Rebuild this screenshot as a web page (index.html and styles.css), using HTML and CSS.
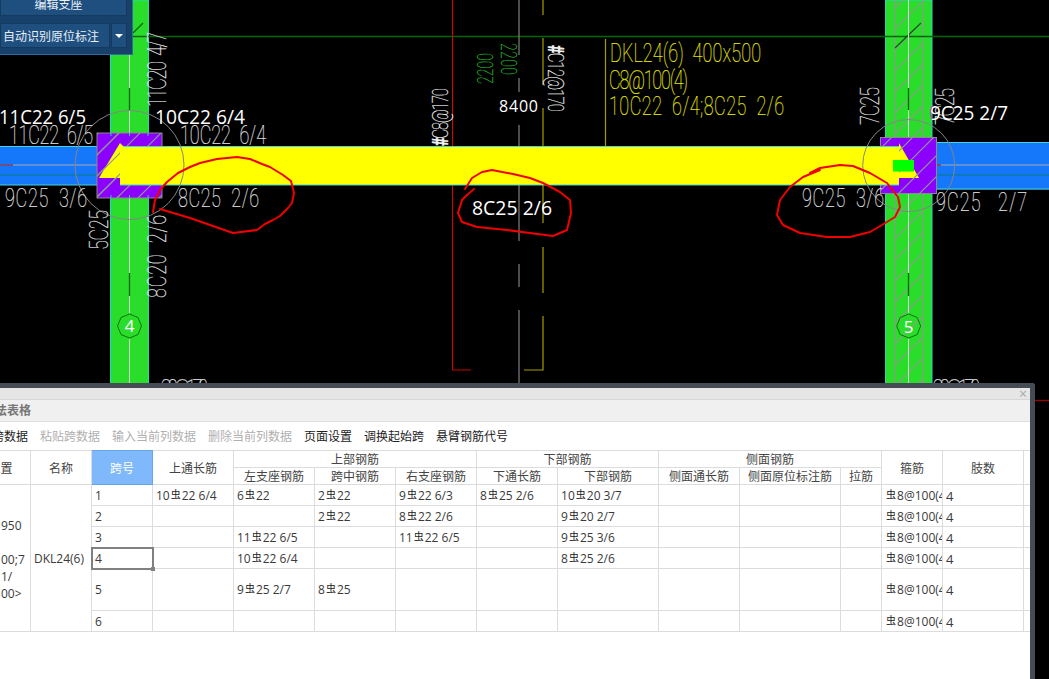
FILE: index.html
```html
<!DOCTYPE html>
<html lang="zh">
<head>
<meta charset="utf-8">
<title>平法表格</title>
<link rel="stylesheet" href="styles.css">
</head>
<body>
<main class="stage">
  <svg class="cad" width="1049" height="679" viewBox="0 0 1049 679" xmlns="http://www.w3.org/2000/svg">
    <defs>
      <pattern id="hatch" patternUnits="userSpaceOnUse" width="21" height="21">
        <path class="hatch-line" d="M-2 23L23 -2M-2 2L2 -2M19 23L23 19"/>
      </pattern>
    </defs>

    <!-- columns -->
    <rect class="col" x="110.5" y="0" width="38" height="390"/>
    <rect class="col" x="885.5" y="0" width="46.5" height="390"/>
    <rect class="hatch-fill" x="895" y="0" width="28" height="390"/>
    <path class="col-rule" d="M895 0V147M895 186V390M922.5 0V390"/>

    <!-- grid and axis lines -->
    <path class="axis-green" d="M133 36.5H1049M133 33L143 23M895 48L921 23"/>
    <path class="axis-green" d="M129.500 88V110M129.500 273V296M908.500 88V110M908.500 273V296"/>
    <path class="axis-white" d="M129.500 55V88M129.500 110V133M129.500 198V273M129.500 296V313M129.500 339V390M908.500 0V88M908.500 110V137M908.500 193V273M908.500 296V313M908.500 339V390"/>
    <path class="line-red" d="M452.500 0V370"/>
    <path class="line-red-dark" d="M452 370H471"/>
    <path class="line-gray" d="M519 0V55M519 78V92M519 125V147M519 185V241M519 264V287M519 310V390"/>
    <path class="line-yellow" d="M543 0V15M543 38V85M543 108V147M543 185V223M543 247V293M543 316V370H524M605.500 39V147"/>
    <path class="line-red-dark" d="M1030 400.500H1049"/>

    <!-- beams -->
    <rect class="beam-blue" x="0" y="147" width="100" height="38"/>
    <rect class="beam-blue" x="936" y="142.500" width="113" height="47"/>
    <path class="beam-edge" d="M0 146.500H101M0 185H101M936 142.500H1049M936 189H1049"/>
    <path class="beam-mid" d="M0 165H100M936 165H1049"/>
    <path class="beam-teal" d="M0 175H100M936 175H1049"/>
    <path class="beam-red" d="M0 165H13M914 165H941"/>

    <!-- supports -->
    <rect class="support" x="97" y="133" width="65" height="65"/>
    <rect class="hatch-fill" x="97" y="133" width="65" height="65"/>
    <rect class="support" x="880.500" y="137.500" width="56" height="56"/>
    <path class="tick" d="M111 133V136M129.500 133V136M148 133V136M111 195V198M129.500 195V198M148 195V198"/>

    <!-- yellow span -->
    <rect class="beam-yellow" x="120" y="147" width="779" height="38"/>
    <path class="beam-edge" d="M123 146.500H899M120 185H899"/>
    <polygon class="beam-yellow" points="120,143 124,147 124,178 99,178"/>
    <polygon class="beam-yellow" points="899,143 919,178 899,178"/>
    <rect class="hatch-fill" x="97" y="133" width="23" height="65"/>
    <rect class="hatch-fill" x="899" y="137.500" width="37.500" height="56"/>
    <rect class="hatch-fill" x="880.500" y="137.500" width="18.500" height="9"/>
    <rect class="hatch-fill" x="880.500" y="185" width="18.500" height="8.500"/>
    <rect class="support-active" x="893" y="160" width="21" height="11.500"/>

    <circle class="ring" cx="129.500" cy="165" r="54.500"/>
    <circle class="ring" cx="908.700" cy="165.500" r="46"/>

    <!-- axis bubbles -->
    <polygon class="bubble" points="129.500,314 138,317.500 141.500,326 138,334.500 129.500,338 121,334.500 117.500,326 121,317.500"/>
    <polygon class="bubble" points="908.700,314 917.200,317.500 920.700,326 917.200,334.500 908.700,338 900.200,334.500 896.700,326 900.200,317.500"/>
    <text class="bubble-text" x="129.500" y="332">4</text>
    <text class="bubble-text" x="908.700" y="333">5</text>

    <!-- drawing text in the stroke font -->
    <text class="shx" transform="translate(9 144) scale(1 1.4)" textLength="84">11C22  6/5</text>
    <text class="shx" transform="translate(180 144) scale(1 1.4)" textLength="86">10C22  6/4</text>
    <text class="shx" transform="translate(5 207) scale(1 1.4)" textLength="82">9C25  3/6</text>
    <text class="shx" transform="translate(178 207) scale(1 1.4)" textLength="81">8C25  2/6</text>
    <text class="shx" transform="translate(802 207) scale(1 1.4)" textLength="82">9C25  3/6</text>
    <text class="shx" transform="translate(936 211) scale(1 1.4)" textLength="91">9C25   2/7</text>
    <text class="shx" transform="translate(166 107) rotate(-90) scale(1 1.4)" textLength="75">11C20  4/7</text>
    <text class="shx" transform="translate(108 250) rotate(-90) scale(1 1.4)" textLength="40">5C25</text>
    <text class="shx" transform="translate(166 298) rotate(-90) scale(1 1.4)" textLength="83">8C20  2/6</text>
    <text class="shx" transform="translate(879 125) rotate(-90) scale(1 1.4)" textLength="38">7C25</text>
    <text class="shx" transform="translate(954 125) rotate(-90) scale(1 1.4)" textLength="37">7C25</text>
    <text class="shx shx-small" transform="translate(448 146) rotate(-90) scale(1 1.45)" textLength="58"><tspan class="shx-blob">#</tspan>C8@170</text>
    <text class="shx shx-small" transform="translate(548 45) rotate(90) scale(1 1.45)" textLength="67"><tspan class="shx-blob">#</tspan>C12@170</text>
    <text class="shx shx-green" transform="translate(493 84) rotate(-90) scale(1 1.55)" textLength="31">2200</text>
    <text class="shx shx-green" transform="translate(501 43) rotate(90) scale(1 1.55)" textLength="32">2200</text>
    <text class="shx shx-yellow" transform="translate(610 62) scale(1 1.4)" textLength="151">DKL24(6)  400x500</text>
    <text class="shx shx-yellow" transform="translate(609 89) scale(1 1.4)" textLength="79">C8@100(4)</text>
    <text class="shx shx-yellow" transform="translate(609 115) scale(1 1.4)" textLength="175">10C22  6/4;8C25  2/6</text>
    <text class="shx" transform="translate(160 398) scale(1 1.4)" textLength="48">C8@170</text>
    <text class="shx" transform="translate(932 398) scale(1 1.4)" textLength="48">C8@170</text>

    <!-- white annotations -->
    <text class="note" x="-1" y="124" textLength="87" lengthAdjust="spacingAndGlyphs">11C22 6/5</text>
    <text class="note" x="155" y="124" textLength="90" lengthAdjust="spacingAndGlyphs">10C22 6/4</text>
    <text class="note note-small" x="499" y="112" textLength="39">8400</text>
    <text class="note" x="472" y="215" textLength="80" lengthAdjust="spacingAndGlyphs">8C25 2/6</text>
    <text class="note" x="930" y="120" textLength="78" lengthAdjust="spacingAndGlyphs">9C25 2/7</text>
    <path class="magenta-mark" d="M933 105C930 108 930 115 932 119"/>

    <!-- red pen marks -->
    <path class="pen" d="M153 212L155 200L160 190L167 182L178 173L190 167L200 163L217 159L237 157L250 159L262 164L270 167L283 175L291 181L294 193L292 203L288 208L280 216L273 220L265 224L257 230L233 233L213 226L190 218L170 212L160 209"/>
    <path class="pen" d="M465 189L472 178L482 172L492 170L513 174L530 178L543 183L560 192L570 200L571 213L567 230L553 236L530 233L507 230L477 227L462 222L458 213L462 200L467 195L474 189"/>
    <path class="pen" d="M810 173L820 168L840 165L853 166L870 173L887 183L898 197L900 207L895 217L882 225L870 232L850 237L827 237L800 233L783 225L777 215L780 200L790 187L803 177L820 170"/>
  </svg>

  <div class="panel">
    <div class="panel-button panel-button-top">编辑支座</div>
    <div class="panel-row">
      <div class="panel-button panel-button-main">自动识别原位标注</div>
      <div class="panel-button panel-button-menu"><span class="caret"></span></div>
    </div>
  </div>

  <section class="dialog">
    <div class="dialog-top"><span class="dialog-close">×</span></div>
    <div class="dialog-title">平法表格</div>
    <div class="toolbar">
      <span class="tool">复制跨数据</span>
      <span class="tool tool-off">粘贴跨数据</span>
      <span class="tool tool-off">输入当前列数据</span>
      <span class="tool tool-off">删除当前列数据</span>
      <span class="tool">页面设置</span>
      <span class="tool">调换起始跨</span>
      <span class="tool">悬臂钢筋代号</span>
    </div>
    <table class="grid">
      <colgroup>
        <col class="w60"><col class="w61"><col class="w61"><col class="w81"><col class="w81"><col class="w81"><col class="w81"><col class="w81"><col class="w101"><col class="w81"><col class="w101"><col class="w41"><col class="w61"><col class="w81"><col class="w7">
      </colgroup>
      <thead>
        <tr class="head-row">
          <th rowspan="2">位置</th>
          <th rowspan="2">名称</th>
          <th rowspan="2" class="head-active">跨号</th>
          <th rowspan="2">上通长筋</th>
          <th colspan="3">上部钢筋</th>
          <th colspan="2">下部钢筋</th>
          <th colspan="3">侧面钢筋</th>
          <th rowspan="2">箍筋</th>
          <th rowspan="2">肢数</th>
          <th rowspan="2"></th>
        </tr>
        <tr class="head-row">
          <th>左支座钢筋</th><th>跨中钢筋</th><th>右支座钢筋</th>
          <th>下通长筋</th><th>下部钢筋</th>
          <th>侧面通长筋</th><th>侧面原位标注筋</th><th>拉筋</th>
        </tr>
      </thead>
      <tbody>
        <tr class="row">
          <td rowspan="6" class="cell-pos"><p class="pos-line pos-a">950</p><p class="pos-line">00;7</p><p class="pos-line">1/</p><p class="pos-line">00&gt;</p></td>
          <td rowspan="6" class="cell-name">DKL24(6)</td>
          <td>1</td><td>10<span class="bar">虫</span>22 6/4</td><td>6<span class="bar">虫</span>22</td><td>2<span class="bar">虫</span>22</td><td>9<span class="bar">虫</span>22 6/3</td><td>8<span class="bar">虫</span>25 2/6</td><td>10<span class="bar">虫</span>20 3/7</td><td></td><td></td><td></td><td class="cell-clip"><span class="bar">虫</span>8@100(4)</td><td class="cell-count">4</td><td></td>
        </tr>
        <tr class="row">
          <td>2</td><td></td><td></td><td>2<span class="bar">虫</span>22</td><td>8<span class="bar">虫</span>22 2/6</td><td></td><td>9<span class="bar">虫</span>20 2/7</td><td></td><td></td><td></td><td class="cell-clip"><span class="bar">虫</span>8@100(4)</td><td class="cell-count">4</td><td></td>
        </tr>
        <tr class="row">
          <td>3</td><td></td><td>11<span class="bar">虫</span>22 6/5</td><td></td><td>11<span class="bar">虫</span>22 6/5</td><td></td><td>9<span class="bar">虫</span>25 3/6</td><td></td><td></td><td></td><td class="cell-clip"><span class="bar">虫</span>8@100(4)</td><td class="cell-count">4</td><td></td>
        </tr>
        <tr class="row">
          <td class="cell-selected">4</td><td></td><td>10<span class="bar">虫</span>22 6/4</td><td></td><td></td><td></td><td>8<span class="bar">虫</span>25 2/6</td><td></td><td></td><td></td><td class="cell-clip"><span class="bar">虫</span>8@100(4)</td><td class="cell-count">4</td><td></td>
        </tr>
        <tr class="row row-tall">
          <td>5</td><td></td><td>9<span class="bar">虫</span>25 2/7</td><td>8<span class="bar">虫</span>25</td><td></td><td></td><td></td><td></td><td></td><td></td><td class="cell-clip"><span class="bar">虫</span>8@100(4)</td><td class="cell-count">4</td><td></td>
        </tr>
        <tr class="row">
          <td>6</td><td></td><td></td><td></td><td></td><td></td><td></td><td></td><td></td><td></td><td class="cell-clip"><span class="bar">虫</span>8@100(4)</td><td class="cell-count">4</td><td></td>
        </tr>
      </tbody>
    </table>
  </section>
</main>
</body>
</html>
```
FILE: styles.css
```css
* { box-sizing: border-box; }

html, body {
  margin: 0;
  padding: 0;
  background: #000;
  overflow: hidden;
}

.stage {
  position: relative;
  width: 1049px;
  height: 679px;
  overflow: hidden;
  background: #000;
  font-family: "Open Sans", "Noto Sans CJK SC", sans-serif;
}

.cad {
  position: absolute;
  left: 0;
  top: 0;
  display: block;
}

/* drawing fills */
.col { fill: #2bdd2b; stroke: #22d6c8; stroke-width: 1; }
.col-rule { fill: none; stroke: #8c9a8c; stroke-width: 1.2; }
.hatch-line { fill: none; stroke: #8f9a8f; stroke-width: 1.2; }
.hatch-fill { fill: url(#hatch); }
.axis-green { fill: none; stroke: #006600; stroke-width: 1.3; }
.axis-white { fill: none; stroke: #d4d4d4; stroke-width: 1; }
.line-red { fill: none; stroke: #e00000; stroke-width: 1; }
.line-red-dark { fill: none; stroke: #9c0000; stroke-width: 1.3; }
.line-gray { fill: none; stroke: #808080; stroke-width: 1.2; }
.line-yellow { fill: none; stroke: #a39d00; stroke-width: 1.2; }
.beam-blue { fill: #1577fa; }
.beam-edge { fill: none; stroke: #45d4dc; stroke-width: 1; }
.beam-mid { fill: none; stroke: #a8a8b8; stroke-width: 1; }
.beam-teal { fill: none; stroke: #0a7c80; stroke-width: 1.2; }
.beam-red { fill: none; stroke: #8a0a2a; stroke-width: 1; }
.beam-yellow { fill: #ffff00; }
.support { fill: #8c00ff; stroke: #8a8a8a; stroke-width: 1; }
.support-active { fill: #00ff00; }
.tick { fill: none; stroke: #2cc8e0; stroke-width: 1; }
.ring { fill: none; stroke: #858585; stroke-width: 1; }
.bubble { fill: none; stroke: #087508; stroke-width: 1; }
.magenta-mark { fill: none; stroke: #e020c0; stroke-width: 1; }
.bubble-text {
  fill: #fff;
  font: 17px "Open Sans", sans-serif;
  text-anchor: middle;
}
.pen {
  fill: none;
  stroke: #f00000;
  stroke-width: 2;
  stroke-linejoin: round;
  stroke-linecap: round;
}

.shx {
  fill: #e2e2e2;
  stroke: #e2e2e2;
  stroke-width: 0.15;
  font-family: Roboto, "Liberation Sans", sans-serif;
  font-weight: 100;
  font-size: 18px;
  white-space: pre;
}
.shx-small { font-size: 15px; fill: #f0f0f0; stroke: #f0f0f0; }
.shx-blob { font-weight: 900; }
.shx-green { fill: #22b022; stroke: #22b022; font-size: 14px; }
.shx-yellow { fill: #e8e800; stroke: #e8e800; }

.note {
  fill: #fff;
  font-family: "Open Sans", sans-serif;
  font-size: 20px;
}
.note-small { font-size: 16px; }

/* property panel */
.panel {
  position: absolute;
  left: 0;
  top: -12px;
  width: 133px;
  height: 67px;
  padding: 0 5px 0 0;
  display: flex;
  flex-direction: column;
  gap: 7px;
  background: #17406a;
  border-right: 1px solid #2c6ba6;
  border-bottom: 1px solid #2c6ba6;
}
.panel-row { display: flex; gap: 1px; height: 25px; }
.panel-button {
  background: #1f4f7f;
  border: 1px solid #143a60;
  color: #e8f0f8;
  font-size: 12px;
  display: flex;
  align-items: center;
  justify-content: center;
}
.panel-button-top { height: 28px; padding: 4px 10px 0 0; }
.panel-button-main { width: 110px; padding-right: 8px; white-space: nowrap; }
.panel-button-menu { width: 16px; }
.caret {
  width: 0;
  height: 0;
  border-left: 4px solid transparent;
  border-right: 4px solid transparent;
  border-top: 4px solid #fff;
}

/* table dialog */
.dialog {
  position: absolute;
  left: -10px;
  top: 383px;
  width: 1045px;
  height: 296px;
  background: #fff;
  border-top: 5px solid #454c55;
  border-right: 5px solid #454c55;
  border-top-right-radius: 3px;
  overflow: hidden;
  color: #333;
  font-size: 12px;
}
.dialog-top {
  height: 12px;
  background: #e6e6e6;
  border-bottom: 1px solid #d6d6d6;
  display: flex;
  justify-content: flex-end;
  padding-right: 3px;
}
.dialog-close {
  color: #a8a8a8;
  font-size: 14px;
  line-height: 11px;
}
.dialog-title {
  height: 22px;
  background: #f0f0f0;
  border-bottom: 1px solid #dedede;
  color: #777;
  font-weight: 700;
  line-height: 21px;
  white-space: nowrap;
  padding-left: 0;
  text-indent: -7px;
}
.toolbar {
  height: 28px;
  display: flex;
  align-items: center;
  gap: 12px;
  margin-left: -22px;
  white-space: nowrap;
  color: #222;
}
.tool-off { color: #b0b0b0; }

.grid {
  border-collapse: collapse;
  table-layout: fixed;
  width: 1060px;
  margin-left: -20px;
}
.w7 { width: 7px; }
.w41 { width: 41px; }
.w60 { width: 60px; }
.w61 { width: 61px; }
.w81 { width: 81px; }
.w101 { width: 101px; }

.grid th, .grid td {
  border: 1px solid #dcdcdc;
  padding: 0;
  overflow: hidden;
  white-space: nowrap;
  font-size: 12px;
}
.grid th {
  font-weight: 400;
  text-align: center;
  color: #444;
  line-height: 15px;
  padding-top: 1px;
}
.head-row { height: 17px; }
.grid th.head-active {
  background: #7fb9fb;
  color: #fff;
  border: 1px solid #64a6ee;
}
.row { height: 21px; }
.row-tall { height: 42px; }
.grid td {
  padding: 1px 0 0 3px;
  color: #3a3a3a;
  line-height: 18px;
}
.bar {
  font-size: 10px;
  margin: 0 1px;
  vertical-align: 2px;
  line-height: 1;
  color: #222;
}
.grid td.cell-count { font-size: 13px; }
.grid td.cell-pos { padding: 0 0 0 30px; vertical-align: top; }
.pos-line { margin: 0; line-height: 17px; }
.pos-a { margin-top: 32px; margin-bottom: 17px; }
.grid td.cell-selected {
  position: relative;
  outline: 2px solid #808080;
  outline-offset: -1px;
  overflow: visible;
}
.cell-selected::after {
  content: "";
  position: absolute;
  right: -3px;
  bottom: -3px;
  width: 4px;
  height: 4px;
  background: #808080;
}
```
